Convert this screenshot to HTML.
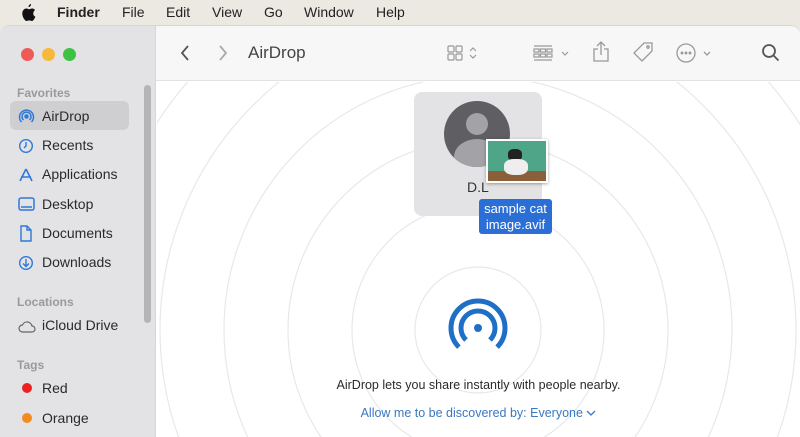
<!DOCTYPE html><html><head><style>
*{margin:0;padding:0;box-sizing:border-box}
body{width:800px;height:437px;overflow:hidden;background:#ece8e2;font-family:"Liberation Sans",sans-serif;position:relative}
.mb{position:absolute;top:0;left:0;width:800px;height:25px;font-size:14px;color:#222}
.mb span{position:absolute;top:4px}
.win{position:absolute;top:25px;left:0;width:800px;height:412px;border-radius:10px 10px 0 0;overflow:hidden;background:#fff;border-top:1px solid #d8d6d2}
.sb{position:absolute;left:0;top:0;width:156px;height:412px;background:#e3e3e5;border-right:1px solid #d6d6d6}
.tb{position:absolute;left:156px;top:0;right:0;height:55px;background:#f7f7f7;border-bottom:1px solid #e2e2e2}
.dot{position:absolute;top:22px;width:13px;height:13px;border-radius:50%}
.h{position:absolute;left:17px;font-size:12px;font-weight:bold;color:#9a9a9c}
.it{position:absolute;left:42px;font-size:14px;color:#2a2a2a}
.ic{position:absolute;left:18px}
.cnt{position:absolute;left:157px;top:56px;right:0;bottom:0;overflow:hidden}
</style></head><body>
<div class="mb">
<svg style="position:absolute;left:21px;top:4px" width="15" height="17" viewBox="0 0 15 17"><path d="M10 0c.2 1.3-.9 3-2.4 3-.2-1.3 1-2.9 2.4-3zM12.4 9c0-2 1.6-2.8 1.7-2.9-1-1.4-2.4-1.6-2.9-1.6-1.2-.1-2.4.7-3 .7s-1.6-.7-2.7-.7C4.1 4.5 2.8 5.3 2 6.6.5 9.2 1.6 13 3.100 15c.7 1 1.5 2.100 2.5 2 1 0 1.400-.6 2.6-.6s1.5.6 2.6.6 1.7-1 2.4-2c.8-1.1 1.1-2.2 1.1-2.3 0 0-2-.8-2.1-3.3z" fill="#111"/></svg>
<span style="left:57px;font-weight:bold">Finder</span><span style="left:122px">File</span><span style="left:166px">Edit</span><span style="left:212px">View</span><span style="left:264px">Go</span><span style="left:304px">Window</span><span style="left:376px">Help</span>
</div>
<div class="win">
<div class="sb">
<div class="dot" style="left:21px;background:#ee5a55"></div><div class="dot" style="left:42px;background:#f6b93b"></div><div class="dot" style="left:63px;background:#3ec243"></div>
<div style="position:absolute;left:144px;top:59px;width:7px;height:238px;border-radius:4px;background:#b5b5b7"></div>
<div class="h" style="top:60px">Favorites</div>
<div style="position:absolute;left:10px;top:75px;width:119px;height:29px;border-radius:6px;background:#cfcfd2"></div>
<svg class="ic" style="top:82px" width="17" height="17" viewBox="0 0 17 17" fill="none" stroke="#2d78d8" stroke-width="1.5"><circle cx="8.5" cy="8.5" r="1.5" fill="#2d78d8"/><path d="M5.5 12a4.5 4.5 0 1 1 6 0M3.5 14a7 7 0 1 1 10 0"/></svg>
<div class="it" style="top:82px">AirDrop</div>
<svg class="ic" style="top:112px" width="16" height="16" viewBox="0 0 16 16" fill="none" stroke="#2d78d8" stroke-width="1.4"><circle cx="8" cy="8" r="6.3"/><path d="M8 4v4l-2 2"/></svg>
<div class="it" style="top:111px">Recents</div>
<svg class="ic" style="top:141px" width="16" height="16" viewBox="0 0 16 16" fill="none" stroke="#2d78d8" stroke-width="1.6"><path d="M8 2L2 14M8 2l6 12M3 10h10"/></svg>
<div class="it" style="top:140px">Applications</div>
<svg class="ic" style="top:171px" width="17" height="15" viewBox="0 0 17 15" fill="none" stroke="#2d78d8" stroke-width="1.5"><rect x="1" y="1" width="15" height="12" rx="2"/><path d="M3 10h11"/></svg>
<div class="it" style="top:170px">Desktop</div>
<svg class="ic" style="top:199px" width="16" height="17" viewBox="0 0 16 17" fill="none" stroke="#2d78d8" stroke-width="1.4"><path d="M3 1h6l4 4v11H3z M9 1v4h4"/></svg>
<div class="it" style="top:199px">Documents</div>
<svg class="ic" style="top:229px" width="16" height="16" viewBox="0 0 16 16" fill="none" stroke="#2d78d8" stroke-width="1.4"><circle cx="8" cy="8" r="6.3"/><path d="M8 4v7M5 8.5l3 3 3-3"/></svg>
<div class="it" style="top:228px">Downloads</div>
<div class="h" style="top:269px">Locations</div>
<svg class="ic" style="top:294px" width="18" height="13" viewBox="0 0 18 13" fill="none" stroke="#666" stroke-width="1.2"><path d="M4.5 12a3.5 3.5 0 0 1 0-7 5 5 0 0 1 9.5 1 3 3 0 0 1 0 6z"/></svg>
<div class="it" style="top:291px">iCloud Drive</div>
<div class="h" style="top:332px">Tags</div>
<div style="position:absolute;left:22px;top:357px;width:10px;height:10px;border-radius:50%;background:#ec2222"></div>
<div class="it" style="top:354px">Red</div>
<div style="position:absolute;left:22px;top:387px;width:10px;height:10px;border-radius:50%;background:#f38a1e"></div>
<div class="it" style="top:384px">Orange</div>
</div>
<div class="tb">
<svg style="position:absolute;left:24px;top:19px" width="10" height="16" viewBox="0 0 10 16" fill="none" stroke="#555" stroke-width="1.8"><path d="M8 1L2 8l6 7"/></svg>
<svg style="position:absolute;left:62px;top:19px" width="10" height="16" viewBox="0 0 10 16" fill="none" stroke="#aaa" stroke-width="1.8"><path d="M2 1l6 7-6 7"/></svg>
<div style="position:absolute;left:92px;top:17px;font-size:17px;color:#444">AirDrop</div>
<svg style="position:absolute;left:290px;top:18px" width="40" height="18" viewBox="0 0 40 18" fill="none" stroke="#999" stroke-width="1.2"><rect x="2" y="2" width="6" height="6" rx="1"/><rect x="10" y="2" width="6" height="6" rx="1"/><rect x="2" y="10" width="6" height="6" rx="1"/><rect x="10" y="10" width="6" height="6" rx="1"/><path d="M24 7l3-3 3 3M24 11l3 3 3-3"/></svg>
<svg style="position:absolute;left:377px;top:18px" width="40" height="18" viewBox="0 0 40 18" fill="none" stroke="#999" stroke-width="1.2"><path d="M1 2h18M1 16h18"/><rect x="1" y="5" width="5" height="3"/><rect x="7.5" y="5" width="5" height="3"/><rect x="14" y="5" width="5" height="3"/><rect x="1" y="10" width="5" height="3"/><rect x="7.5" y="10" width="5" height="3"/><rect x="14" y="10" width="5" height="3"/><path d="M29 8l3 3 3-3"/></svg>
<svg style="position:absolute;left:436px;top:15px" width="18" height="22" viewBox="0 0 18 22" fill="none" stroke="#999" stroke-width="1.3"><path d="M6 8H2v12h14V8h-4M9 14V1M5 5l4-4 4 4"/></svg>
<svg style="position:absolute;left:476px;top:15px" width="22" height="22" viewBox="0 0 22 22" fill="none" stroke="#999" stroke-width="1.3"><path d="M12 2h8v8L10 20 2 12z"/><circle cx="16" cy="6" r="1.2"/></svg>
<svg style="position:absolute;left:520px;top:16px" width="40" height="22" viewBox="0 0 40 22" fill="none" stroke="#999" stroke-width="1.3"><circle cx="10" cy="11" r="9"/><circle cx="6" cy="11" r=".8" fill="#999"/><circle cx="10" cy="11" r=".8" fill="#999"/><circle cx="14" cy="11" r=".8" fill="#999"/><path d="M28 10l3 3 3-3"/></svg>
<svg style="position:absolute;left:605px;top:17px" width="20" height="20" viewBox="0 0 20 20" fill="none" stroke="#555" stroke-width="1.8"><circle cx="8" cy="8" r="6"/><path d="M12.5 12.5l5 5"/></svg>
</div>
<div class="cnt">
<svg style="position:absolute;left:0;top:0" width="643" height="356" fill="none" stroke="#e8e8e8" stroke-width="1.2">
<circle cx="321" cy="248" r="63"/><circle cx="321" cy="248" r="126"/><circle cx="321" cy="248" r="190"/><circle cx="321" cy="248" r="254"/><circle cx="321" cy="248" r="318"/><circle cx="321" cy="248" r="382"/><circle cx="321" cy="248" r="446"/>
</svg>
<div style="position:absolute;left:257px;top:10px;width:128px;height:124px;border-radius:8px;background:#e3e3e5"></div>
<div style="position:absolute;left:287px;top:19px;width:66px;height:66px;border-radius:50%;background:#5f5f63;overflow:hidden">
<div style="position:absolute;left:22px;top:12px;width:22px;height:22px;border-radius:50%;background:#a3a3a7"></div>
<div style="position:absolute;left:10px;top:38px;width:46px;height:36px;border-radius:50%;background:#a3a3a7"></div>
</div>
<div style="position:absolute;left:310px;top:97px;font-size:14px;color:#333">D.L</div>
<div style="position:absolute;left:329px;top:57px;width:62px;height:44px;background:#fff;box-shadow:0 1px 3px rgba(0,0,0,.35)">
<div style="position:absolute;left:2px;top:2px;width:58px;height:40px;background:#4fa588;overflow:hidden">
<div style="position:absolute;left:0;top:30px;width:58px;height:10px;background:#8a5f3a"></div>
<div style="position:absolute;left:20px;top:8px;width:14px;height:12px;border-radius:40%;background:#222"></div>
<div style="position:absolute;left:16px;top:18px;width:24px;height:16px;border-radius:40%;background:#eee"></div>
</div></div>
<div style="position:absolute;left:322px;top:117px;width:73px;height:35px;border-radius:3px;background:#2b6fd6;color:#fff;font-size:13px;line-height:16px;text-align:center;padding-top:2px">sample cat<br>image.avif</div>
<svg style="position:absolute;left:289px;top:216px" width="64" height="62" viewBox="0 0 64 62" fill="none" stroke="#1f6fc6" stroke-width="5"><circle cx="32" cy="30" r="4" fill="#1f6fc6" stroke="none"/><path d="M20 42A17 17 0 1 1 44 42"/><path d="M12.9 49.1A27 27 0 1 1 51.1 49.1"/></svg>
<div style="position:absolute;left:0;width:643px;top:296px;text-align:center;font-size:12.5px;color:#2a2a2a">AirDrop lets you share instantly with people nearby.</div>
<div style="position:absolute;left:0;width:643px;top:324px;text-align:center;font-size:12.5px;color:#3a78c2">Allow me to be discovered by: Everyone <svg width="10" height="7" viewBox="0 0 10 7" fill="none" stroke="#3a78c2" stroke-width="1.3"><path d="M1 1l4 4 4-4"/></svg></div>
</div>
</div>
</body></html>
